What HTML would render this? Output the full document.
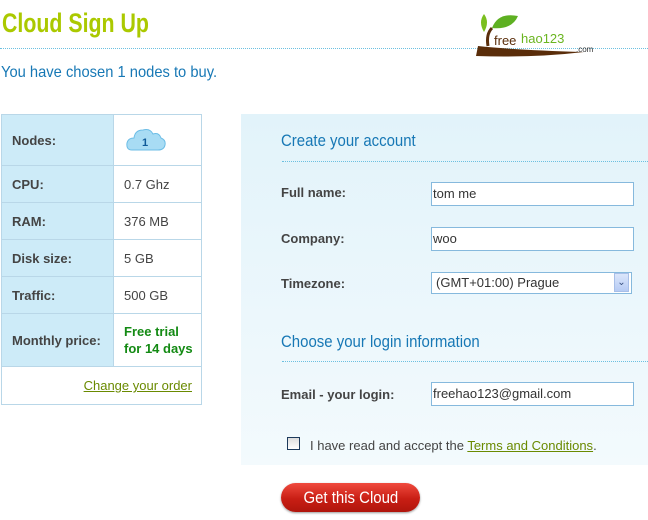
<!DOCTYPE html>
<html><head><meta charset="utf-8"><style>
body{margin:0;width:648px;height:520px;background:#fff;font-family:"Liberation Sans",Arial,sans-serif;position:relative;overflow:hidden}
.a{position:absolute;white-space:nowrap}
.cond{transform-origin:0 0;display:inline-block}
.dot{position:absolute;height:0;border-top:1px dotted #6cc0e0}
table{position:absolute;left:1px;top:114px;border-collapse:collapse;font-size:13px;color:#444}
td{border:1px solid #b9d7e8;padding:0 0 0 10px}
td.l{background:#cdebf8;font-weight:bold;width:101px;color:#444}
td.r{width:75px}
.panel{position:absolute;left:241px;top:114px;width:407px;height:351px;background:linear-gradient(#e2f3fa,#f3fafd)}
.lab{font-weight:bold;font-size:13px;color:#444}
.inp{position:absolute;left:431px;width:200px;height:22px;border:1px solid #86b9dd;background:#fff;font-size:13px;color:#333;line-height:22px;padding-left:1px;box-sizing:content-box}
.h2{color:#1778b5;font-size:17px}
</style></head><body>
<div class="a" style="left:2px;top:8px;font-size:27px;font-weight:bold;color:#abc900"><span class="cond" style="transform:scaleX(0.79)">Cloud Sign Up</span></div>
<div class="dot" style="left:0;top:48px;width:648px"></div>
<svg class="a" style="left:474px;top:12px" width="126" height="46" viewBox="0 0 126 46">
<path d="M14 34 Q12 22 18 16" stroke="#5a2d0a" stroke-width="3" fill="none"/>
<path d="M10 20 Q4 10 10 2 Q16 10 10 20Z" fill="#7bbf1f"/>
<path d="M18 16 Q24 0 44 4 Q38 18 18 16Z" fill="#5eb022"/>
<path d="M2 44 L4 34 Q40 38 110 40 Q60 46 2 44Z" fill="#5a2d0a"/>
<text x="20" y="33" font-family="Liberation Sans" font-size="13" fill="#5a2d0a">free</text>
<text x="47" y="31" font-family="Liberation Sans" font-size="13" fill="#6ab520">hao123</text>
<text x="102" y="40" font-family="Liberation Sans" font-size="8" fill="#333">.com</text>
</svg>
<div class="a" style="left:1px;top:64px;font-size:16px;color:#1778b5"><span class="cond" style="transform:scaleX(0.92)">You have chosen 1 nodes to buy.</span></div>
<table>
<tr style="height:51px"><td class="l">Nodes:</td><td class="r" style="padding-left:12px"><svg width="40" height="26" viewBox="0 0 40 26"><path d="M6 24 Q0 24 1 17 Q2 12 8 12 Q9 4 17 4 Q24 2 27 8 Q33 6 35 12 Q40 14 39 19 Q38 24 32 24Z" fill="#a8dcf4" stroke="#6cbde6"/><text x="16" y="20" font-size="11" font-weight="bold" fill="#0e5a99" font-family="Liberation Sans">1</text></svg></td></tr>
<tr style="height:37px"><td class="l">CPU:</td><td class="r">0.7 Ghz</td></tr>
<tr style="height:37px"><td class="l">RAM:</td><td class="r">376 MB</td></tr>
<tr style="height:37px"><td class="l">Disk size:</td><td class="r">5 GB</td></tr>
<tr style="height:37px"><td class="l">Traffic:</td><td class="r">500 GB</td></tr>
<tr style="height:53px"><td class="l">Monthly price:</td><td class="r" style="color:#138a13;font-weight:bold;line-height:17px">Free trial<br>for 14 days</td></tr>
<tr style="height:38px"><td colspan="2" style="text-align:right;padding-right:9px"><span style="color:#6a8a00;text-decoration:underline">Change your order</span></td></tr>
</table>
<div class="panel"></div>
<div class="a h2" style="left:281px;top:131px"><span class="cond" style="transform:scaleX(0.88)">Create your account</span></div>
<div class="dot" style="left:282px;top:161px;width:366px"></div>
<div class="a lab" style="left:281px;top:185px">Full name:</div>
<div class="inp" style="top:182px">tom me</div>
<div class="a lab" style="left:281px;top:231px">Company:</div>
<div class="inp" style="top:227px">woo</div>
<div class="a lab" style="left:281px;top:276px">Timezone:</div>
<div class="inp" style="top:272px;width:195px;height:20px;line-height:20px;padding-left:4px">(GMT+01:00) Prague</div>
<div class="a" style="left:614px;top:273px;width:15px;height:19px;background:linear-gradient(#dbe6fb,#b6cbf4);border:1px solid #a8bfe8;box-sizing:border-box;color:#3a5080;font-size:10px;text-align:center;line-height:18px">&#8964;</div>
<div class="a h2" style="left:281px;top:332px"><span class="cond" style="transform:scaleX(0.88)">Choose your login information</span></div>
<div class="dot" style="left:282px;top:361px;width:366px"></div>
<div class="a lab" style="left:281px;top:387px">Email - your login:</div>
<div class="inp" style="top:382px">freehao123@gmail.com</div>
<div class="a" style="left:287px;top:437px;width:11px;height:11px;border:1px solid #1d3a5c;background:linear-gradient(#ddd,#fff)"></div>
<div class="a" style="left:310px;top:438px;font-size:13px;color:#444">I have read and accept the <span style="color:#6a8a00;text-decoration:underline">Terms and Conditions</span>.</div>
<div class="a" style="left:281px;top:483px;width:139px;height:29px;border-radius:15px;background:linear-gradient(#f04a3e,#c81e14 55%,#b0150c);color:#fff;font-size:17px;text-align:center;line-height:29px;box-shadow:0 1px 2px #999"><span class="cond" style="transform:scaleX(0.88);transform-origin:50% 0">Get this Cloud</span></div>
</body></html>
